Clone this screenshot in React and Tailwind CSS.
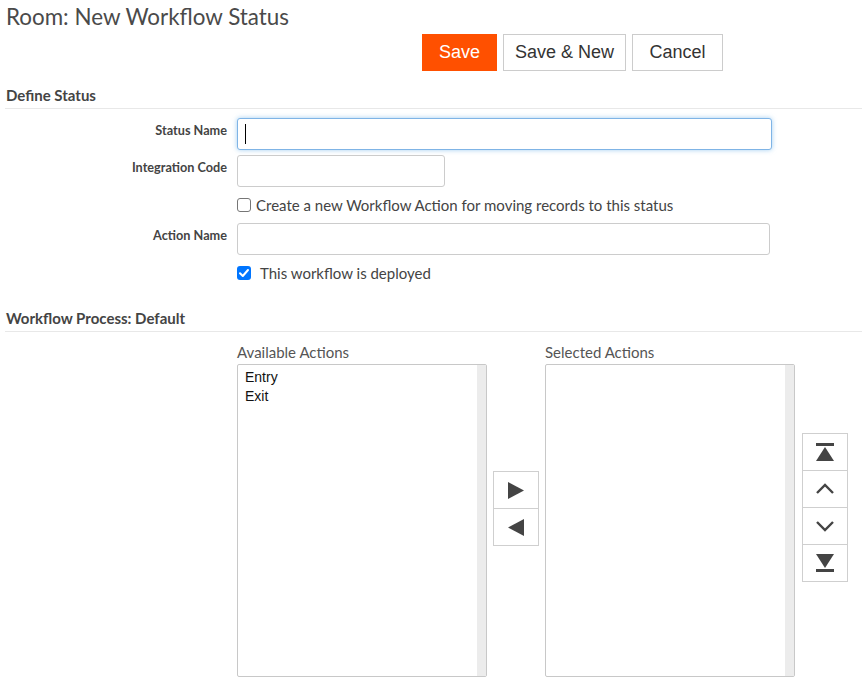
import React from "react";

const lato = { fontFamily: "Lato, 'Noto Sans', sans-serif" };

const FieldRow = ({ label, children, className = "" }) => (
    <div className={`flex items-start ${className}`}>
        <div className="w-[222px] pt-[4px] text-right text-[12.7px] font-bold leading-[16px] text-[#444]">{label}</div>
        <div className="ml-[10px]">{children}</div>
    </div>
);

const Listbox = ({ items = [] }) => (
    <div className="flex h-[313px] w-[250px] rounded-[2px] border border-[#c8c8c8] bg-white">
        <div className="flex-1 pl-[7px] pt-[3px] text-[14px] leading-[19px] text-[#111]" style={{ fontFamily: "'Liberation Sans', Arial, sans-serif" }}>
            {items.map((it) => (
                <div key={it}>{it}</div>
            ))}
        </div>
        <div className="w-[9px] bg-[#ececec]" />
    </div>
);

const IconBtn = ({ children }) => (
    <div className="flex h-[38px] w-[46px] items-center justify-center border border-[#cfcfcf] bg-white -mt-px first:mt-0">
        {children}
    </div>
);

export default function App() {
    return (
        <div className="min-h-[687px] w-[867px] bg-white text-[#444]" style={lato}>
            <div className="px-[6px] pt-[2px] text-[22.4px] leading-[30px] text-[#4a4a4a]">Room: New Workflow Status</div>

            <div className="ml-[422px] mt-[2px] flex gap-[6px]" style={{ fontFamily: "'Liberation Sans', Arial, sans-serif" }}>
                <button className="h-[37px] w-[75px] bg-[#ff5000] text-[18px] text-white">Save</button>
                <button className="h-[37px] w-[123px] border border-[#cccccc] bg-white text-[18px] text-[#333]">Save &amp; New</button>
                <button className="h-[37px] w-[91px] border border-[#cccccc] bg-white text-[18px] text-[#333]">Cancel</button>
            </div>

            <div className="mx-[5px] mt-[15px] border-b border-[#e8e8e8] px-px pb-[3px] text-[15px] font-bold leading-[19px] text-[#444]">Define Status</div>

            <FieldRow label="Status Name" className="mt-[9px] ml-[5px]">
                <div className="flex h-[32px] w-[535px] items-center rounded-[3px] border border-[#7fb4e6] bg-white pl-[7px] shadow-[0_0_5px_rgba(102,175,233,0.6)]">
                    <span className="h-[20px] w-px bg-black" />
                </div>
            </FieldRow>

            <FieldRow label="Integration Code" className="mt-[5px] ml-[5px]">
                <div className="h-[32px] w-[208px] rounded-[3px] border border-[#cccccc] bg-white" />
            </FieldRow>

            <div className="ml-[237px] mt-[9px] flex items-center text-[15px] leading-[18px] text-[#444]">
                <span className="h-[14px] w-[14px] rounded-[3px] border border-[#767676] bg-white" />
                <span className="ml-[5px]">Create a new Workflow Action for moving records to this status</span>
            </div>

            <FieldRow label="Action Name" className="mt-[9px] ml-[5px]">
                <div className="h-[32px] w-[533px] rounded-[3px] border border-[#cccccc] bg-white" />
            </FieldRow>

            <div className="ml-[237px] mt-[9px] flex items-center text-[15px] leading-[18px] text-[#444]">
                <span className="flex h-[14px] w-[14px] items-center justify-center rounded-[3px] bg-[#0075ff]">
                    <svg viewBox="0 0 14 14" className="h-[14px] w-[14px]">
                        <path d="M3 7.2 L5.8 10 L11 4" fill="none" stroke="white" strokeWidth="2" strokeLinecap="round" strokeLinejoin="round" />
                    </svg>
                </span>
                <span className="ml-[9px]">This workflow is deployed</span>
            </div>

            <div className="mx-[5px] mt-[27px] border-b border-[#e8e8e8] px-px pb-[3px] text-[15px] font-bold leading-[19px] text-[#444]">Workflow Process: Default</div>

            <div className="ml-[237px] mt-[10px] flex">
                <div>
                    <div className="text-[15px] leading-[20px] text-[#555]">Available Actions</div>
                    <div className="mt-[2px]">
                        <Listbox items={["Entry", "Exit"]} />
                    </div>
                </div>

                <div className="ml-[6px] mt-[129px] flex flex-col">
                    <IconBtn>
                        <svg viewBox="0 0 16 17" className="h-[17px] w-[16px]"><path d="M0 0 L16 8.5 L0 17 Z" fill="#444" /></svg>
                    </IconBtn>
                    <IconBtn>
                        <svg viewBox="0 0 16 17" className="h-[17px] w-[16px]"><path d="M16 0 L0 8.5 L16 17 Z" fill="#444" /></svg>
                    </IconBtn>
                </div>

                <div className="ml-[6px]">
                    <div className="text-[15px] leading-[20px] text-[#555]">Selected Actions</div>
                    <div className="mt-[2px]">
                        <Listbox />
                    </div>
                </div>

                <div className="ml-[7px] mt-[91px] flex flex-col">
                    <IconBtn>
                        <svg viewBox="0 0 18 18" className="h-[18px] w-[18px]">
                            <rect x="0" y="0" width="18" height="3" fill="#444" />
                            <path d="M9 4 L18 18 L0 18 Z" fill="#444" />
                        </svg>
                    </IconBtn>
                    <IconBtn>
                        <svg viewBox="0 0 20 18" className="h-[18px] w-[20px]">
                            <path d="M2 13 L10 5 L18 13" fill="none" stroke="#444" strokeWidth="2.4" />
                        </svg>
                    </IconBtn>
                    <IconBtn>
                        <svg viewBox="0 0 20 18" className="h-[18px] w-[20px]">
                            <path d="M2 5 L10 13 L18 5" fill="none" stroke="#444" strokeWidth="2.4" />
                        </svg>
                    </IconBtn>
                    <IconBtn>
                        <svg viewBox="0 0 18 18" className="h-[18px] w-[18px]">
                            <path d="M0 0 L18 0 L9 14 Z" fill="#444" />
                            <rect x="0" y="15" width="18" height="3" fill="#444" />
                        </svg>
                    </IconBtn>
                </div>
            </div>
        </div>
    );
}
